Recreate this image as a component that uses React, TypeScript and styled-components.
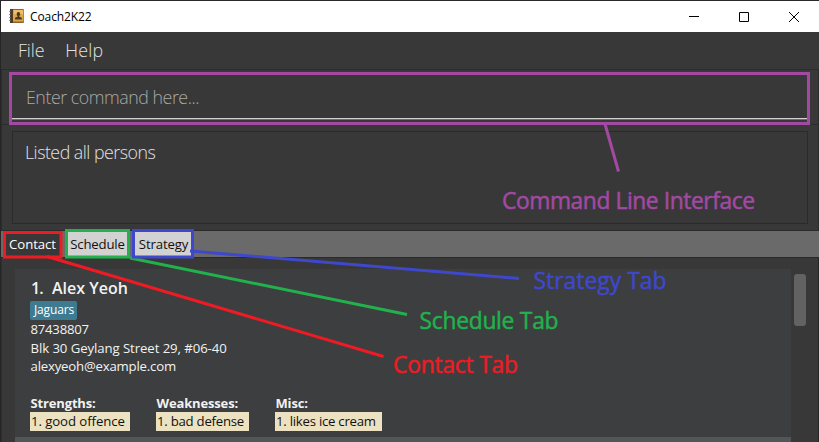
import React from 'react';
import styled, { createGlobalStyle } from 'styled-components';

const GlobalStyle = createGlobalStyle`
  *, *::before, *::after { box-sizing: border-box; }
  body { margin: 0; overflow: hidden; background: #383838; }
`;

const Window = styled.div`
  position: relative;
  display: flex;
  flex-direction: column;
  width: 819px;
  height: 442px;
  overflow: hidden;
  border-top: 1px solid #2b2929;
  border-left: 1px solid #262626;
  background: #383838;
  font-family: 'Open Sans', 'Noto Sans', sans-serif;
  white-space: pre;
`;

const TitleBar = styled.header`
  display: flex;
  align-items: center;
  flex: 0 0 31px;
  padding-left: 8px;
  background: #fff;
`;

const Title = styled.h1`
  flex: 1;
  margin: 0 0 0 5px;
  color: #000;
  font-size: 12px;
  font-weight: 400;
  line-height: 30px;
  letter-spacing: -0.1px;
`;

const WindowButtons = styled.div`
  display: flex;
`;

const WindowButton = styled.button`
  display: flex;
  align-items: center;
  justify-content: center;
  width: 50px;
  height: 31px;
  padding: 0;
  border: 0;
  background: none;
`;

const MenuBar = styled.nav`
  display: flex;
  flex: 0 0 37px;
  padding-left: 17px;
  gap: 21px;
`;

const MenuItem = styled.span<{ $spacing: number }>`
  color: #e2e2e2;
  font-size: 17.8px;
  font-weight: 300;
  line-height: 37px;
  letter-spacing: ${(p) => p.$spacing}px;
`;

const Pane = styled.section<{ $height: number }>`
  flex: 0 0 ${(p) => p.$height}px;
  border: 1px solid #2c2c2c;
  border-bottom: 0;
  padding: 0 10px;
`;

const CommandField = styled.div`
  height: 49px;
  padding: 9px 14px 0;
  border-bottom: 1px solid #d0d0d0;
  box-shadow: 0 1px 0 #6c6c6c;
  color: #a8a8a8;
  font-size: 17.8px;
  font-weight: 300;
  line-height: 37px;
  letter-spacing: -0.46px;
`;

const ResultBox = styled.div`
  height: 93px;
  margin-top: 6px;
  padding: 2px 12px;
  border: 1px solid #2a2a2a;
  color: #e2e2e2;
  font-size: 17.8px;
  font-weight: 300;
  line-height: 36px;
  letter-spacing: -0.5px;
`;

const TabBar = styled.div`
  display: flex;
  flex: 0 0 28px;
  gap: 3px;
  padding-left: 2px;
  border-top: 1px solid #2a2a2a;
  border-bottom: 1px solid #2a2a2a;
  background: #6a6a6a;
`;

const Tab = styled.button<{ $width: number; $selected?: boolean; $spacing: number }>`
  width: ${(p) => p.$width}px;
  padding: 0 0 1px;
  border: 0;
  background: ${(p) => (p.$selected ? '#383838' : '#d2d2d2')};
  color: ${(p) => (p.$selected ? '#fff' : '#111')};
  font: 400 13.2px 'Open Sans', sans-serif;
  letter-spacing: ${(p) => p.$spacing}px;
`;

const ListArea = styled.main`
  display: flex;
  flex: 1;
  gap: 3px;
  padding: 11px 12px 0 13px;
  border-left: 1px solid #2e2e2e;
  border-right: 1px solid #262626;
`;

const CardList = styled.div`
  width: 776px;
`;

const PersonCard = styled.article`
  height: 168px;
  padding: 9px 15px;
  background: #3c3e3f;
  color: #f2f2f2;
`;

const NextCard = styled(PersonCard)`
  background: #515658;
`;

const Name = styled.h2`
  display: flex;
  margin: 0;
  padding-left: 1px;
  height: 23px;
  font-size: 16px;
  font-weight: 600;
  line-height: 20px;
`;

const Index = styled.span`
  width: 21px;
  letter-spacing: -0.8px;
`;

const Tag = styled.span`
  display: block;
  width: 47px;
  height: 19px;
  padding-left: 4px;
  border-radius: 2px;
  background: #3e7b91;
  color: #fff;
  font-size: 12px;
  line-height: 18px;
  letter-spacing: -0.15px;
`;

const Detail = styled.p<{ $spacing: number }>`
  margin: 0;
  padding-left: 0.5px;
  font-size: 13.2px;
  line-height: 18.7px;
  letter-spacing: ${(p) => p.$spacing}px;
`;

const Notes = styled.div`
  display: flex;
  margin-top: 18px;
  gap: 26px;
`;

const NoteTitle = styled.h3`
  margin: 0;
  padding-left: 0.5px;
  font-size: 13px;
  font-weight: 700;
  line-height: 18px;
  letter-spacing: -0.15px;
`;

const NoteGroup = styled.div<{ $width: number }>`
  width: ${(p) => p.$width}px;
`;

const Note = styled.div<{ $spacing: number }>`
  height: 19px;
  padding-left: 1px;
  background: #ece1c0;
  color: #111;
  font-size: 13.2px;
  line-height: 18px;
  letter-spacing: ${(p) => p.$spacing}px;
`;

const ScrollThumb = styled.div`
  width: 12px;
  height: 52px;
  margin-top: 5px;
  border-radius: 3px;
  background: #626262;
`;

const Annotations = styled.svg`
  position: absolute;
  top: -1px;
  left: -1px;
  fill: none;
  stroke-width: 3;
`;

const Label = styled.text`
  font-family: 'Open Sans', sans-serif;
  font-size: 22.8px;
  stroke-width: 0.5;
`;

const BookIcon = () => (
  <svg width="16" height="15" viewBox="0 0 16 15">
    <path d="M1 0h13a1 1 0 0 1 1 1v12a1 1 0 0 1-1 1H1z" fill="#8b642f" />
    <path d="M4 1h10.500v11.500H4z" fill="#dda64d" />
    <path d="M5 1h9v4H5z" fill="#edbd69" />
    <path d="M1 0h3v14H1z" fill="#4c3b2d" />
    <path d="M0 2h1.500v1H0zM0 5h1.500v1H0zM0 8h1.500v1H0zM0 11h1.500v1H0z" fill="#9b9189" />
    <path d="M9.400 3a1.800 1.800 0 0 1 1.700 2c0 1-.4 1.600-.8 2v.8l2.500 1V10.500H6V8.800l2.500-1V7c-.4-.4-.8-1-.8-2A1.800 1.800 0 0 1 9.400 3z" fill="#493820" />
  </svg>
);

const tabs = [
  { name: 'Contact', width: 59, spacing: -0.08, selected: true },
  { name: 'Schedule', width: 65, spacing: -0.2 },
  { name: 'Strategy', width: 61, spacing: -0.14 },
];

const notes = [
  { title: 'Strengths:', text: '1. good offence', width: 100, spacing: -0.08 },
  { title: 'Weaknesses:', text: '1. bad defense', width: 93, spacing: -0.25 },
  { title: 'Misc:', text: '1. likes ice cream', width: 107, spacing: -0.25 },
];

const callouts = [
  { name: 'Command Line Interface', color: '#a349a4', box: [10.5, 73.5, 798, 50], line: [605, 124, 618.5, 171.5], x: 502, y: 209, length: 253 },
  { name: 'Contact Tab', color: '#ed1c24', box: [4.5, 232.5, 56.500, 24.500], line: [47, 256.500, 383.5, 356.500], x: 393, y: 373, length: 125 },
  { name: 'Schedule Tab', color: '#22b14c', box: [66.5, 230.5, 62, 26.5], line: [130, 258, 407, 314.5], x: 419.500, y: 329, length: 139 },
  { name: 'Strategy Tab', color: '#3f48cc', box: [133.5, 230.5, 59, 26.5], line: [190, 251, 519, 278.5], x: 533.5, y: 289, length: 133 },
];

export default function App() {
  return (
    <>
      <GlobalStyle />
      <Window>
        <TitleBar>
          <BookIcon />
          <Title>Coach2K22</Title>
          <WindowButtons>
            <WindowButton aria-label="Minimize">
              <svg width="12" height="12"><path d="M1 5.5h10" stroke="#000" /></svg>
            </WindowButton>
            <WindowButton aria-label="Maximize">
              <svg width="12" height="12"><path d="M1.500 1.500h9v9h-9z" stroke="#000" fill="none" /></svg>
            </WindowButton>
            <WindowButton aria-label="Close">
              <svg width="12" height="12"><path d="M1 1l10 10M11 1L1 11" stroke="#000" /></svg>
            </WindowButton>
          </WindowButtons>
        </TitleBar>
        <MenuBar>
          <MenuItem $spacing={-0.1}>File</MenuItem>
          <MenuItem $spacing={0.2}>Help</MenuItem>
        </MenuBar>
        <Pane $height={55}>
          <CommandField>Enter command here...</CommandField>
        </Pane>
        <Pane $height={106}>
          <ResultBox>Listed all persons</ResultBox>
        </Pane>
        <TabBar>
          {tabs.map((t) => (
            <Tab key={t.name} $width={t.width} $spacing={t.spacing} $selected={t.selected}>
              {t.name}
            </Tab>
          ))}
        </TabBar>
        <ListArea>
          <CardList>
            <PersonCard>
              <Name><Index>1.</Index>Alex Yeoh</Name>
              <Tag>Jaguars</Tag>
              <Detail $spacing={-0.25}>87438807</Detail>
              <Detail $spacing={-0.08}>Blk 30 Geylang Street 29, #06-40</Detail>
              <Detail $spacing={-0.2}>alexyeoh@example.com</Detail>
              <Notes>
                {notes.map((n) => (
                  <NoteGroup key={n.title} $width={n.width}>
                    <NoteTitle>{n.title}</NoteTitle>
                    <Note $spacing={n.spacing}>{n.text}</Note>
                  </NoteGroup>
                ))}
              </Notes>
            </PersonCard>
            <NextCard />
          </CardList>
          <ScrollThumb />
        </ListArea>
        <Annotations width="819" height="442">
          {callouts.map(({ name, color, box, line, x, y, length }) => (
            <g key={name} stroke={color}>
              <rect x={box[0]} y={box[1]} width={box[2]} height={box[3]} />
              <line x1={line[0]} y1={line[1]} x2={line[2]} y2={line[3]} />
              <Label x={x} y={y} textLength={length} fill={color}>{name}</Label>
            </g>
          ))}
        </Annotations>
      </Window>
    </>
  );
}
